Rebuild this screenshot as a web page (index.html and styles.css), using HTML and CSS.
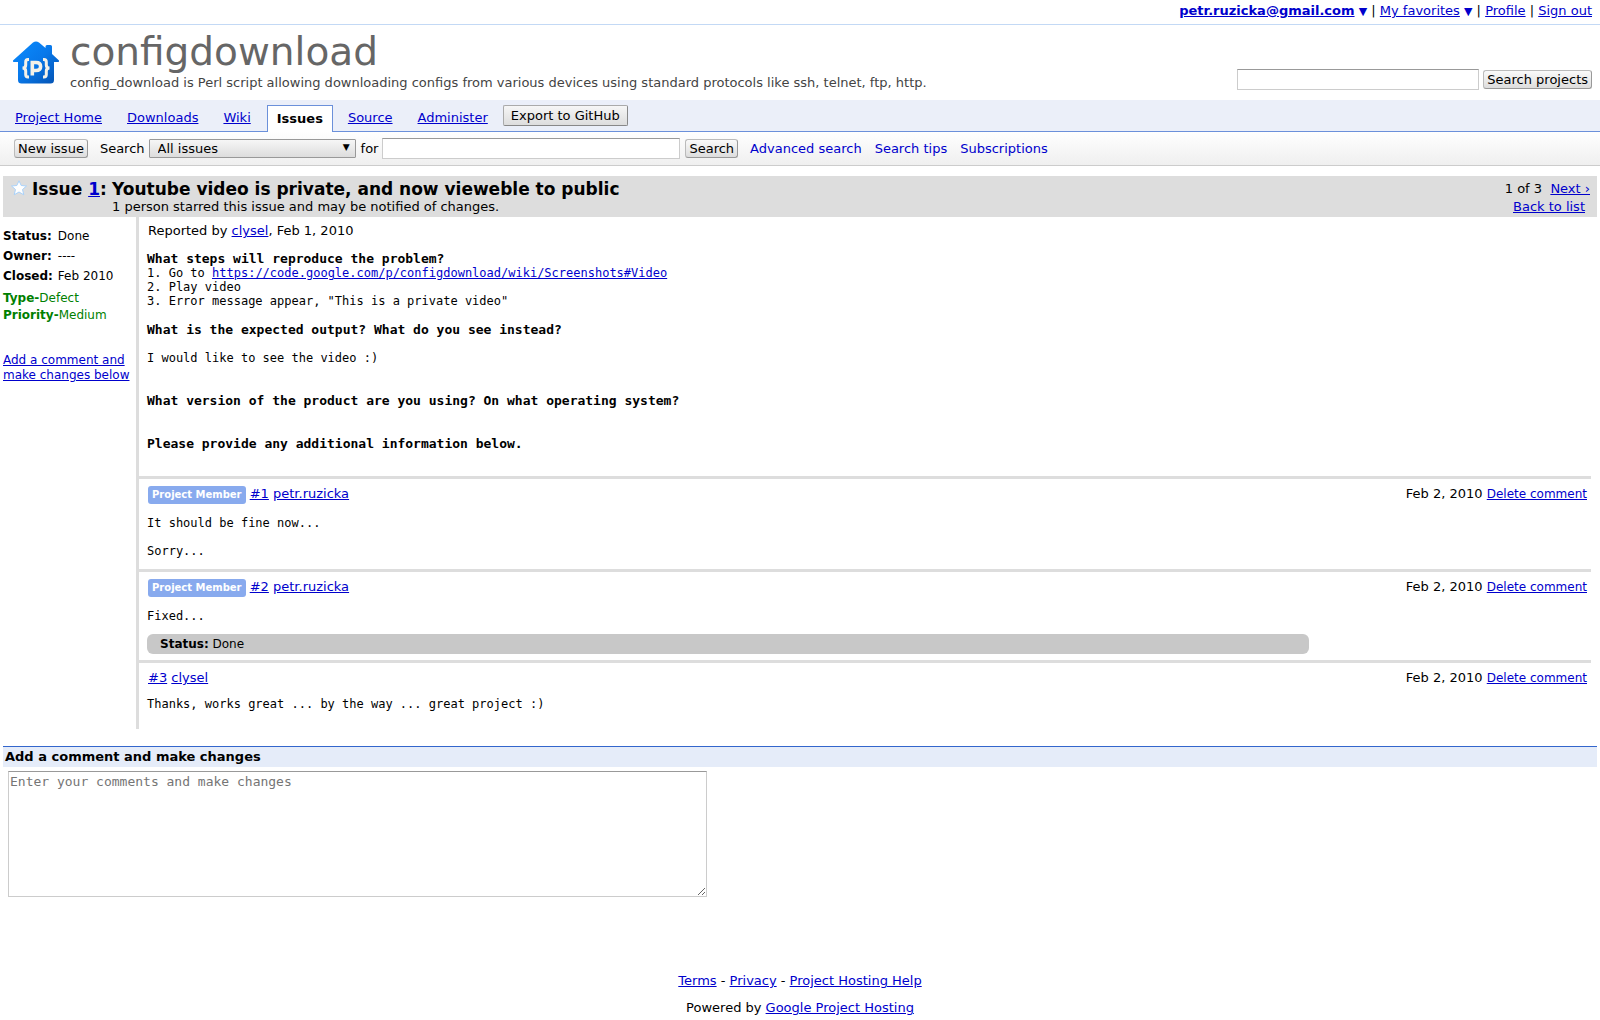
FILE: index.html
```html
<!DOCTYPE html>
<html lang="en">
<head>
<meta charset="utf-8">
<title>Issue 1 - configdownload - Project Hosting</title>
<link rel="stylesheet" href="styles.css">
</head>
<body>
<nav class="account">
  <a href="#"><b>petr.ruzicka@gmail.com</b></a> <a class="plain caret" href="#">▼</a> | <a href="#">My favorites</a> <a class="plain caret" href="#">▼</a> | <a href="#">Profile</a> | <a href="#">Sign out</a>
</nav>

<header class="masthead">
  <svg class="logo" viewBox="0 0 48 46" width="48" height="46" aria-hidden="true">
    <defs>
      <linearGradient id="house" x1="0" y1="0" x2="1" y2="1">
        <stop offset="0" stop-color="#0a8cff"/><stop offset="0.5" stop-color="#0878ea"/><stop offset="1" stop-color="#0450ae"/>
      </linearGradient>
    </defs>
    <path fill="url(#house)" d="M21 2.600Q24 .2 27 2.600L33.500 8V6.500Q33.500 5 35 5H38.500Q40 5 40 6.500V14L47 20.500Q47.500 22 46 22H42V40Q42 43.500 38.500 43.500H9.500Q6 43.500 6 40V22H2Q.5 22 1 20.500Z"/>
    <g fill="none" stroke="#f4f1e8" stroke-width="3">
      <path d="M17 19.500H16Q13.700 19.500 13.700 22V25Q13.700 28 10.500 28Q13.700 28 13.700 31V34.500Q13.700 37 16 37H17"/>
      <path d="M31 19.500H32Q34.300 19.500 34.300 22V25Q34.300 28 37.500 28Q34.300 28 34.300 31V34.500Q34.300 37 32 37H31"/>
      <path stroke-width="3.600" d="M20.300 35.500V22.500H24Q28.600 22.500 28.600 26.500Q28.600 30.500 24 30.500H20.300"/>
    </g>
  </svg>
  <div class="project">
    <h1>configdownload</h1>
    <p>config_download is Perl script allowing downloading configs from various devices using standard protocols like ssh, telnet, ftp, http.</p>
  </div>
  <form class="project-search">
    <input class="field" type="text" aria-label="Search projects">
    <button class="btn" type="button">Search projects</button>
  </form>
</header>

<nav class="tabs">
  <a href="#">Project Home</a>
  <a href="#">Downloads</a>
  <a href="#">Wiki</a>
  <a class="current" href="#">Issues</a>
  <a href="#">Source</a>
  <a href="#">Administer</a>
  <button class="export" type="button">Export to GitHub</button>
</nav>

<form class="toolbar">
  <button class="btn new-issue" type="button">New issue</button>
  <label for="scope">Search</label>
  <span class="select"><select id="scope"><option>All issues</option></select></span>
  <label for="query">for</label>
  <input class="field query" id="query" type="text">
  <button class="btn" type="button">Search</button>
  <div class="tool-links">
    <a class="plain" href="#">Advanced search</a>
    <a class="plain" href="#">Search tips</a>
    <a class="plain" href="#">Subscriptions</a>
  </div>
</form>

<main>
  <header class="issue-head">
    <svg class="star" viewBox="0 0 16 16" width="16" height="16" aria-hidden="true">
      <path fill="#fff" stroke="#a9d2fb" d="M8 .8L10.200 5.500L15.500 6L11.500 9.500L12.800 14.800L8 12L3.200 14.800L4.500 9.500L.5 6L5.800 5.500Z"/>
    </svg>
    <span class="issue-id">Issue <a href="#">1</a>:</span>
    <div class="issue-title">
      <h2>Youtube video is private, and now vieweble to public</h2>
      <p>1 person starred this issue and may be notified of changes.</p>
    </div>
    <div class="pager">
      <p>1 of 3 &nbsp;<a href="#">Next ›</a></p>
      <p class="back"><a href="#">Back to list</a></p>
    </div>
  </header>

  <div class="issue">
    <aside class="meta">
      <table>
        <tr><th>Status:</th><td>Done</td></tr>
        <tr><th>Owner:</th><td>----</td></tr>
        <tr><th>Closed:</th><td>Feb 2010</td></tr>
      </table>
      <p class="label"><b>Type-</b>Defect</p>
      <p class="label"><b>Priority-</b>Medium</p>
      <a class="jump" href="#add-comment">Add a comment and make changes below</a>
    </aside>

    <div class="thread">
      <article class="report">
        <p class="byline">Reported by <a href="#">clysel</a>, Feb 1, 2010</p>
<pre><b>What steps will reproduce the problem?</b>
1. Go to <a href="#">https://code.google.com/p/configdownload/wiki/Screenshots#Video</a>
2. Play video
3. Error message appear, "This is a private video"

<b>What is the expected output? What do you see instead?</b>

I would like to see the video :)


<b>What version of the product are you using? On what operating system?</b>


<b>Please provide any additional information below.</b>
</pre>
      </article>

      <article class="comment">
        <div class="comment-head">
          <p><span class="badge">Project Member</span> <a href="#">#1</a> <a href="#">petr.ruzicka</a></p>
          <p>Feb 2, 2010 <a class="delete" href="#">Delete comment</a></p>
        </div>
<pre>It should be fine now...

Sorry...</pre>
      </article>

      <article class="comment">
        <div class="comment-head">
          <p><span class="badge">Project Member</span> <a href="#">#2</a> <a href="#">petr.ruzicka</a></p>
          <p>Feb 2, 2010 <a class="delete" href="#">Delete comment</a></p>
        </div>
<pre>Fixed...</pre>
        <p class="update"><b>Status:</b> Done</p>
      </article>

      <article class="comment last">
        <div class="comment-head">
          <p><a href="#">#3</a> <a href="#">clysel</a></p>
          <p>Feb 2, 2010 <a class="delete" href="#">Delete comment</a></p>
        </div>
<pre>Thanks, works great ... by the way ... great project :)</pre>
      </article>
    </div>
  </div>

  <form class="add-comment" id="add-comment">
    <label for="comment">Add a comment and make changes</label>
    <textarea id="comment" placeholder="Enter your comments and make changes"></textarea>
  </form>
</main>

<footer>
  <p><a href="#">Terms</a> - <a href="#">Privacy</a> - <a href="#">Project Hosting Help</a></p>
  <p>Powered by <a href="#">Google Project Hosting</a></p>
</footer>
</body>
</html>
```
FILE: styles.css
```css
* {
  box-sizing: border-box;
}

body,
h1,
h2,
p,
pre {
  margin: 0;
}

body {
  background: #fff;
  color: #000;
  font: 13px/16px "DejaVu Sans", sans-serif;
}

a {
  color: #0000cc;
}

.plain {
  text-decoration: none;
}

button,
input,
select {
  font: inherit;
  color: inherit;
}

.field {
  height: 21px;
  padding: 1px 2px;
  border: 1px solid #ccc;
  border-top-color: #999;
  background: #fff;
}

.btn {
  height: 19px;
  padding: 0 3px;
  border: 1px solid #aaa;
  border-color: #bbb #999 #999 #bbb;
  border-radius: 3px;
  background: linear-gradient(#fafafa, #ddd);
  line-height: 16px;
  white-space: nowrap;
}

.account {
  padding: 3px 8px 5px;
  border-bottom: 1px solid #c3d9f5;
  text-align: right;
}

.caret {
  font-size: 11px;
  line-height: 11px;
}

.masthead {
  display: flex;
  height: 75px;
  padding: 0 8px 0 12px;
}

.logo {
  flex: none;
  margin: 15px 10px 0 0;
}

.project {
  flex: 1;
}

.project h1 {
  padding-top: 4px;
  color: #666;
  font-size: 39px;
  font-weight: normal;
  line-height: 46px;
}

.project p {
  color: #444;
}

.project-search {
  display: flex;
  gap: 4px;
  align-items: center;
  align-self: flex-end;
  margin-bottom: 10px;
}

.project-search .field {
  width: 242px;
}

.tabs {
  display: flex;
  align-items: flex-end;
  height: 32px;
  padding-left: 3px;
  border-bottom: 1px solid #6b90da;
  background: #ebeff9;
}

.tabs a {
  padding: 0 13px 5px 12px;
}

.tabs .current {
  height: 27px;
  margin: 0 3px -1px 3px;
  padding: 5px 9px 0;
  border: 1px solid #6b90da;
  border-bottom: 0;
  background: #fff;
  color: #000;
  font-weight: bold;
  text-decoration: none;
}

.export {
  height: 21px;
  margin: 0 0 5px 2px;
  padding: 0 7px;
  border: 1px solid #999;
  border-color: #aaa #888 #888 #aaa;
  border-radius: 2px;
  background: linear-gradient(#f6f6f6, #ddd);
}

.toolbar {
  display: flex;
  align-items: center;
  height: 34px;
  padding-left: 14px;
  border-bottom: 1px solid #ccc;
  background: linear-gradient(#fff, #efefef);
}

.new-issue {
  margin-right: 12px;
}

.select {
  position: relative;
  margin: 0 5px 0 4px;
}

.select::after {
  content: "▼";
  position: absolute;
  top: 0;
  right: 6px;
  font-size: 9px;
  pointer-events: none;
}

.select select {
  display: block;
  appearance: none;
  width: 207px;
  height: 19px;
  padding: 0 8px;
  border: 1px solid #999;
  border-radius: 1px;
  background: linear-gradient(#f6f6f6, #ddd);
}

.query {
  width: 298px;
  margin: 0 5px 0 4px;
}

.tool-links {
  display: flex;
  gap: 13px;
  margin-left: 12px;
}

main {
  padding: 10px 3px 0;
}

.issue-head {
  display: flex;
  height: 41px;
  padding: 4px 7px 0 8px;
  background: #ddd;
}

.star {
  flex: none;
  margin-right: 5px;
}

.issue-id,
.issue-title h2 {
  font-size: 17px;
  font-weight: bold;
  line-height: 18px;
}

.issue-id {
  width: 80px;
}

.issue-title {
  flex: 1;
}

.issue-title p,
.pager p {
  line-height: 18px;
}

.pager {
  text-align: right;
}

.pager .back {
  padding-right: 5px;
}

.issue {
  display: flex;
}

.meta {
  width: 133px;
  padding-top: 9px;
  font-size: 12px;
}

.meta table {
  border-spacing: 0;
  margin-bottom: 4px;
}

.meta th,
.meta td {
  height: 20px;
  padding: 0;
  text-align: left;
  line-height: 16px;
}

.meta th {
  padding-right: 5px;
}

.label {
  color: #008000;
  line-height: 17px;
}

.jump {
  display: block;
  margin-top: 29px;
  line-height: 15px;
}

.thread {
  flex: 1;
  margin-right: 6px;
  border-left: 3px solid #ddd;
}

.thread pre {
  padding-left: 8px;
  font: 12px "DejaVu Sans Mono", monospace;
}

.thread pre b {
  font-size: 13px;
}

.byline {
  padding: 6px 9px 12px;
}

.report {
  padding-bottom: 25px;
}

.comment {
  padding-bottom: 11px;
  border-top: 3px solid #ddd;
}

.comment-head {
  display: flex;
  justify-content: space-between;
  padding: 6px 4px 12px 9px;
}

.comment-head p {
  line-height: 17px;
}

.badge {
  display: inline-block;
  padding: 0 4px;
  border-radius: 3px;
  background: #88aaee;
  color: #fff;
  font-size: 10px;
  font-weight: bold;
  line-height: 18px;
}

.delete {
  font-size: 12px;
}

.update {
  width: 80%;
  margin: 11px 0 -5px 8px;
  padding: 0 13px;
  border-radius: 6px;
  background: #c8c8c8;
  font-size: 12px;
  line-height: 20px;
}

.last {
  padding-bottom: 18px;
}

.last .comment-head {
  padding-bottom: 10px;
}

.add-comment {
  margin-top: 17px;
}

.add-comment label {
  display: block;
  padding: 1px 2px 2px;
  border-top: 1px solid #3366cc;
  background: #e5ecf9;
  font-weight: bold;
  line-height: 17px;
}

.add-comment textarea {
  display: block;
  width: 699px;
  height: 126px;
  margin: 4px 5px 0;
  padding: 2px 1px;
  border: 1px solid #ccc;
  border-top-color: #999;
  font: 13px "DejaVu Sans Mono", monospace;
}

footer {
  padding: 76px 0 4px;
  text-align: center;
}

footer p + p {
  margin-top: 11px;
}
```
